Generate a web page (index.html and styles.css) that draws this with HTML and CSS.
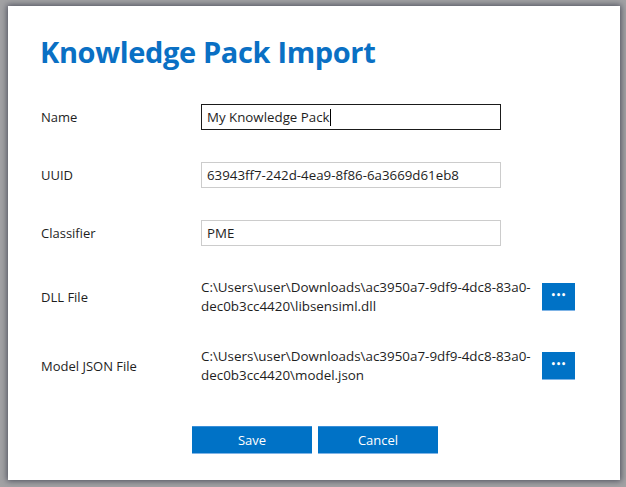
FILE: index.html
```html
<!DOCTYPE html>
<html>
<head>
<meta charset="utf-8">
<link rel="stylesheet" href="styles.css">
</head>
<body>
<div class="dialog">
  <h1 class="title">Knowledge Pack Import</h1>
  <div class="form">
    <div class="row">
      <div class="label">Name</div>
      <div class="input focused">My Knowledge Pack<span class="caret"></span></div>
    </div>
    <div class="row">
      <div class="label">UUID</div>
      <div class="input">63943ff7-242d-4ea9-8f86-6a3669d61eb8</div>
    </div>
    <div class="row">
      <div class="label">Classifier</div>
      <div class="input">PME</div>
    </div>
    <div class="row file-row">
      <div class="label">DLL File</div>
      <div class="path">C:\Users\user\Downloads\ac3950a7-9df9-4dc8-83a0-<br>dec0b3cc4420\libsensiml.dll</div>
      <button class="browse">&#8226;&#8226;&#8226;</button>
    </div>
    <div class="row file-row">
      <div class="label">Model JSON File</div>
      <div class="path">C:\Users\user\Downloads\ac3950a7-9df9-4dc8-83a0-<br>dec0b3cc4420\model.json</div>
      <button class="browse">&#8226;&#8226;&#8226;</button>
    </div>
  </div>
  <div class="actions">
    <button class="action">Save</button>
    <button class="action">Cancel</button>
  </div>
</div>
</body>
</html>
```
FILE: styles.css
```css
html, body {
  margin: 0;
  padding: 0;
}
body {
  background: #a2a2a4;
  width: 626px;
  height: 487px;
  overflow: hidden;
  font-family: "Open Sans", "Noto Sans", sans-serif;
  color: #1e1e1e;
}
.dialog {
  box-sizing: border-box;
  margin: 6px 0 0 8px;
  width: 612px;
  height: 474px;
  background: #ffffff;
  box-shadow: 0 0 6px 1px rgba(50, 52, 70, 0.75);
  padding: 0 0 0 32px;
}
.title {
  margin: 0;
  padding-top: 26px;
  font-size: 29px;
  line-height: 40px;
  font-weight: 700;
  color: #0a70c4;
  letter-spacing: -0.35px;
}
.form {
  display: flex;
  flex-direction: column;
  margin-top: 32px;
}
.row {
  display: flex;
  align-items: center;
  height: 26px;
  margin-bottom: 32px;
}
.file-row {
  height: 36px;
  margin-bottom: 33px;
}
.file-row + .file-row {
  margin-bottom: 0;
}
.row:nth-child(4) {
  margin-top: 1px;
}
.label {
  width: 160px;
  padding-left: 1px;
  font-size: 13px;
}
.input {
  box-sizing: border-box;
  width: 300px;
  height: 26px;
  border: 1px solid #cccccc;
  padding: 0 5px;
  font-size: 13.3px;
  line-height: 24px;
  white-space: nowrap;
}
.input.focused {
  border-color: #1a1a1a;
}
.caret {
  display: inline-block;
  width: 1px;
  height: 17px;
  background: #000;
  vertical-align: -4px;
}
.path {
  width: 341px;
  font-size: 13.4px;
  line-height: 19px;
  white-space: nowrap;
}
.browse {
  box-sizing: border-box;
  width: 33px;
  height: 28px;
  margin: 0;
  padding: 0 0 2px;
  border: none;
  border-bottom: 1px solid #7fb4e6;
  background: #0072c6;
  color: #fff;
  font-family: "DejaVu Sans", sans-serif;
  font-size: 8px;
  font-weight: 700;
  letter-spacing: 0px;
}
.actions {
  display: flex;
  gap: 6px;
  margin-top: 42px;
  padding-left: 152px;
}
.action {
  box-sizing: border-box;
  width: 120px;
  height: 28px;
  margin: 0;
  padding: 0;
  border: none;
  border-top: 1px solid #3a8fd8;
  border-bottom: 1px solid #7fb4e6;
  background: #0072c6;
  color: #fff;
  font-family: "Open Sans", sans-serif;
  font-size: 13px;
}
```
